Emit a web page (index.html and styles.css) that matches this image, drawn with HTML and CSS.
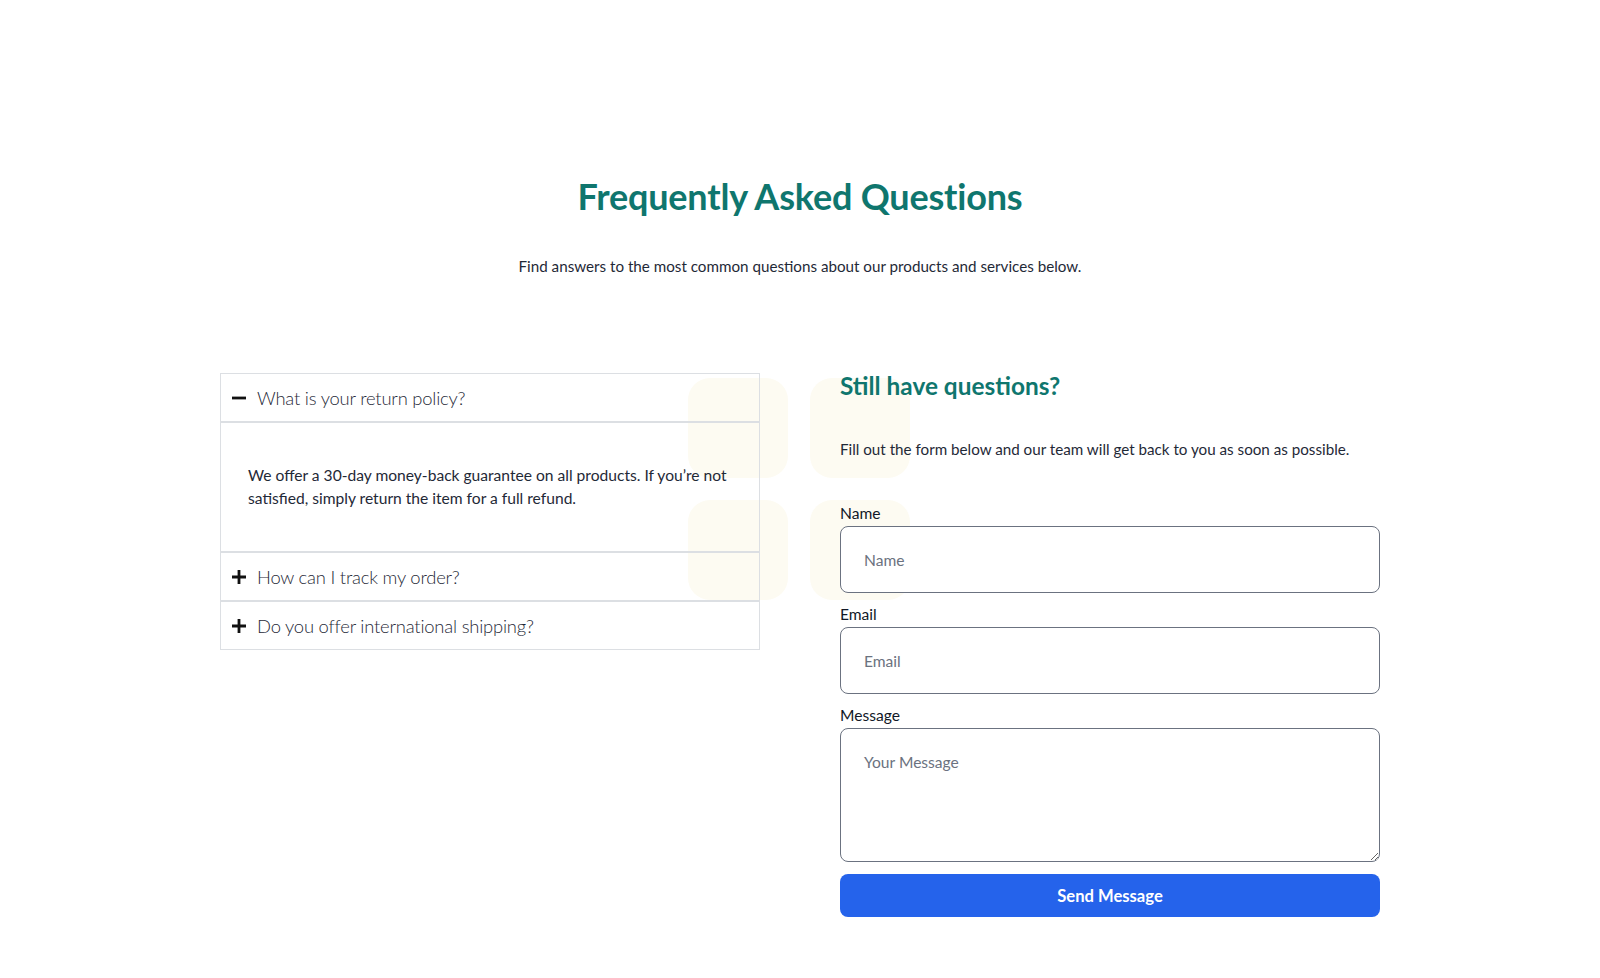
FILE: index.html
```html
<!DOCTYPE html>
<html lang="en">
<head>
<meta charset="utf-8">
<title>FAQ</title>
<link rel="stylesheet" href="styles.css">
</head>
<body>
<main class="faq">
  <div class="deco" aria-hidden="true">
    <span class="sq"></span><span class="sq"></span><span class="sq"></span><span class="sq"></span>
  </div>
  <header class="faq-head">
    <h1 class="faq-title">Frequently Asked Questions</h1>
    <p class="faq-sub">Find answers to the most common questions about our products and services below.</p>
  </header>
  <div class="faq-grid">
    <section class="accordion">
      <div class="acc-head">
        <svg class="acc-icon" viewBox="0 0 14 14"><path d="M0 7H14" stroke="#111" stroke-width="2.8"/></svg>
        <span class="acc-q">What is your return policy?</span>
      </div>
      <div class="acc-body">
        <p>We offer a 30-day money-back guarantee on all products. If you’re not satisfied, simply return the item for a full refund.</p>
      </div>
      <div class="acc-head">
        <svg class="acc-icon" viewBox="0 0 14 14"><path d="M0 7H14M7 0V14" stroke="#111" stroke-width="2.8"/></svg>
        <span class="acc-q">How can I track my order?</span>
      </div>
      <div class="acc-head">
        <svg class="acc-icon" viewBox="0 0 14 14"><path d="M0 7H14M7 0V14" stroke="#111" stroke-width="2.8"/></svg>
        <span class="acc-q">Do you offer international shipping?</span>
      </div>
    </section>
    <section class="contact">
      <h2 class="contact-title">Still have questions?</h2>
      <p class="contact-text">Fill out the form below and our team will get back to you as soon as possible.</p>
      <form class="form">
        <div class="field">
          <label class="label" for="name">Name</label>
          <input class="input" id="name" type="text" placeholder="Name">
        </div>
        <div class="field">
          <label class="label" for="email">Email</label>
          <input class="input" id="email" type="email" placeholder="Email">
        </div>
        <div class="field">
          <label class="label" for="msg">Message</label>
          <textarea class="input textarea" id="msg" placeholder="Your Message"></textarea>
        </div>
        <button class="btn" type="button">Send Message</button>
      </form>
    </section>
  </div>
</main>
</body>
</html>
```

FILE: styles.css
```css
* { box-sizing: border-box; }
html, body { margin: 0; padding: 0; background: #fff; }
body {
  font-family: "Lato", "Open Sans", sans-serif;
  color: #1f2937;
}
.faq {
  position: relative;
  width: 1160px;
  margin: 0 auto;
  padding-top: 176px;
}
.deco {
  position: absolute;
  left: 468px;
  top: 378px;
  display: grid;
  grid-template-columns: 100px 100px;
  gap: 22px;
  z-index: 0;
}
.sq {
  width: 100px;
  height: 100px;
  border-radius: 22px;
  background: #fdfbf2;
}
.faq-head { text-align: center; position: relative; z-index: 1; }
.faq-title {
  margin: 0;
  font-size: 36px;
  line-height: 40px;
  font-weight: 700;
  color: #0f766e;
  letter-spacing: -0.2px;
}
.faq-sub {
  margin: 38px 0 0;
  font-size: 15.2px;
  line-height: 24px;
  color: #1f2937;
}
.faq-grid {
  position: relative;
  z-index: 1;
  display: grid;
  grid-template-columns: 540px 540px;
  gap: 80px;
  margin-top: 83px;
  align-items: start;
}
.accordion { margin-top: 12px; }
.acc-head {
  display: flex;
  align-items: center;
  gap: 11px;
  height: 49px;
  padding: 0 11px;
  border: 1px solid #dcdfe3;
}
.acc-icon { width: 14px; height: 14px; flex: none; }
.acc-q {
  font-size: 18.4px;
  font-weight: 300;
  color: #1f2937;
  letter-spacing: -0.2px;
}
.acc-body {
  border: 1px solid #dcdfe3;
  height: 130px;
  padding: 41px 26px 0 27px;
}
.acc-body p {
  margin: 0;
  font-size: 15.6px;
  line-height: 22.5px;
  color: #1f2937;
}
.contact-title {
  margin: 9px 0 0;
  font-size: 24.4px;
  line-height: 32px;
  font-weight: 700;
  color: #0f766e;
}
.contact-text {
  margin: 35px 0 0;
  font-size: 15.2px;
  line-height: 24px;
  color: #1f2937;
}
.form {
  margin-top: 42px;
  display: flex;
  flex-direction: column;
  gap: 11px;
}
.field { display: flex; flex-direction: column; gap: 3px; }
.label {
  font-size: 15.6px;
  line-height: 20px;
  color: #111827;
}
.input {
  display: block;
  width: 100%;
  height: 67px;
  padding: 0 23px;
  border: 1px solid #6b7280;
  border-radius: 8px;
  background: #fff;
  font-family: inherit;
  font-size: 15.6px;
  color: #111827;
}
.input::placeholder { color: #6b7280; }
.textarea {
  height: 134px;
  padding: 24px 23px;
  resize: vertical;
}
.btn {
  margin-top: 1px;
  height: 43px;
  border: 0;
  border-radius: 8px;
  background: #2563eb;
  color: #fff;
  font-family: inherit;
  font-size: 16.6px;
  font-weight: 700;
  cursor: pointer;
}
```
